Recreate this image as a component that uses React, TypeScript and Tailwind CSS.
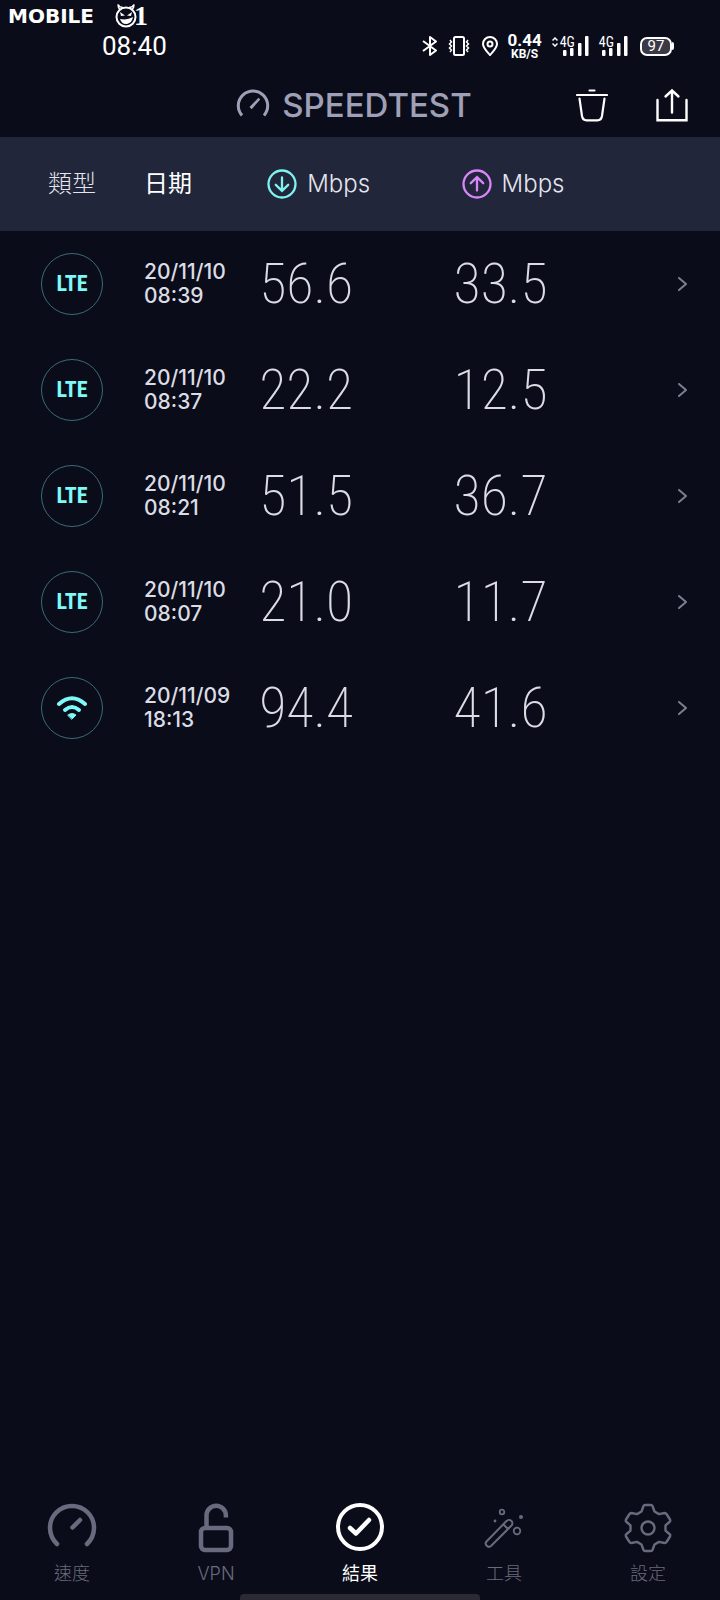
import type { ReactNode } from 'react';

interface Result {
  type: 'LTE' | 'wifi';
  date: string;
  time: string;
  download: string;
  upload: string;
}

const results: Result[] = [
  { type: 'LTE', date: '20/11/10', time: '08:39', download: '56.6', upload: '33.5' },
  { type: 'LTE', date: '20/11/10', time: '08:37', download: '22.2', upload: '12.5' },
  { type: 'LTE', date: '20/11/10', time: '08:21', download: '51.5', upload: '36.7' },
  { type: 'LTE', date: '20/11/10', time: '08:07', download: '21.0', upload: '11.7' },
  { type: 'wifi', date: '20/11/09', time: '18:13', download: '94.4', upload: '41.6' }
];

const SignalBars = () => (
  <svg width="26" height="20" viewBox="0 0 26 20" fill="currentColor">
    <rect x="0" y="14" width="3.500" height="6" rx="1" />
    <rect x="7" y="12" width="3.500" height="8" rx="1" />
    <rect x="15" y="7" width="3.500" height="13" rx="1" />
    <rect x="22" y="0" width="3.500" height="20" rx="1" />
  </svg>
);

const Watermark = () => (
  <div className="absolute top-1 left-2 flex h-6 items-center">
    <span className="w-[106px] font-['DejaVu_Sans',sans-serif] text-xl leading-6 font-bold">MOBILE</span>
    <svg width="24" height="26" viewBox="0 0 24 26" fill="none" stroke="currentColor">
      <circle cx="12" cy="14" r="9.500" strokeWidth="2" />
      <path d="M6 6.500C4 5 4 3 4 1.500c1 2 3 3 5 3M18 6.500c2-1.500 2-3.500 2-5-1 2-3 3-5 3" strokeWidth="1.500" />
      <path d="M6 9l5 3.500-4 .5zM18 9l-5 3.500 4 .5zM6 16c5 1 9 0 13-2-1 5-4 7-7 7s-5-2-6-5z" fill="currentColor" stroke="none" />
    </svg>
    <span className="-ml-1 font-['Liberation_Serif',serif] text-[28px] leading-6 font-bold">1</span>
  </div>
);

const StatusBar = () => (
  <div className="flex items-center justify-between pt-[28px] pr-[46px] pb-[9px] pl-[102px]">
    <span className="font-[Roboto,sans-serif] text-[26px] leading-6">08:40</span>
    <div className="flex h-9 items-center font-[Roboto,sans-serif]">
      <svg width="16" height="20" viewBox="0 0 16 20" fill="none" stroke="currentColor" strokeWidth="2">
        <path d="M1 5l13 9.500-6 4.500V1l6 4.500L1 15" strokeLinejoin="round" />
      </svg>
      <svg className="ml-[10px]" width="22" height="20" viewBox="0 0 22 20" fill="none" stroke="currentColor" strokeWidth="2">
        <rect x="6" y="1" width="10" height="18" rx="1.500" />
        <path d="M2 4l1.500 2-2 2 2 2-2 2 2 2L2 16M20 4l-1.500 2 2 2-2 2 2 2-2 2 1.500 2" strokeWidth="1.500" />
      </svg>
      <svg className="ml-3" width="16" height="20" viewBox="0 0 16 20" fill="none" stroke="currentColor" strokeWidth="2">
        <path d="M8 19C5 15.500 1 12 1 8a7 7 0 0 1 14 0c0 4-4 7.500-7 11z" />
        <circle cx="8" cy="8" r="2.500" />
      </svg>
      <span className="ml-[10px] flex w-[34px] flex-col items-center font-bold">
        <span className="text-[17px] leading-[15px]">0.44</span>
        <span className="text-[12px] leading-[12px]">KB/S</span>
      </span>
      <svg className="mr-[2px] mb-2 ml-[10px]" width="6" height="10" viewBox="0 0 6 10" fill="none" stroke="currentColor" strokeWidth="1.500">
        <path d="M.5 3.500L3 1l2.500 2.500M.5 6.500L3 9l2.500-2.500" />
      </svg>
      <span className="mb-2 font-['Roboto_Condensed',sans-serif] text-[14px] leading-3">4G</span>
      <span className="-ml-3">
        <SignalBars />
      </span>
      <span className="mb-2 ml-[10px] font-['Roboto_Condensed',sans-serif] text-[14px] leading-3">4G</span>
      <span className="-ml-3">
        <SignalBars />
      </span>
      <span className="ml-3 flex h-[19px] w-[32px] items-center justify-center rounded-[7px] border-2 border-current bg-[#3a3a46] text-[15px] leading-none">
        97
      </span>
      <span className="h-2 w-[2px] rounded-r bg-current" />
    </div>
  </div>
);

const TitleBar = () => (
  <header className="grid h-16 grid-cols-[1fr_auto_1fr] items-center pr-8 pl-5">
    <h1 className="col-start-2 flex items-center gap-3 text-[33px] leading-10 font-medium text-[#9fa0b7]">
      <svg width="34" height="34" viewBox="0 0 34 34" fill="none" stroke="currentColor" strokeWidth="3">
        <path d="M6 27.500A14.700 14.700 0 1 1 28 27.500" />
        <path d="M13.500 19l9-9.200 1.700 1.600-8.500 9.800z" fill="currentColor" stroke="none" />
      </svg>
      SPEEDTEST
    </h1>
    <div className="flex items-center justify-end gap-12">
      <button aria-label="刪除">
        <svg width="32" height="34" viewBox="0 0 32 34" fill="none" stroke="currentColor" strokeWidth="2.200" strokeLinecap="round">
          <path d="M13.500 2.500h5M1 7h30" />
          <path d="M3.500 10.500L6 28q.8 4.300 4.500 4.300h11q3.700 0 4.500-4.300l2.500-17.500" />
        </svg>
      </button>
      <button aria-label="分享">
        <svg width="32" height="34" viewBox="0 0 32 34" fill="none" stroke="currentColor" strokeWidth="2.400" strokeLinecap="round">
          <path d="M1.500 12v20.300h29V12" />
          <path d="M16 24.500V2.500M9.500 8.500L16 2.500l6.500 6" />
        </svg>
      </button>
    </div>
  </header>
);

const SpeedHeading = ({ direction }: { direction: 'down' | 'up' }) => (
  <div className="flex items-center gap-[10px] pl-2">
    <svg
      className={direction === 'down' ? 'text-[#7df4f0]' : 'text-[#da86fb]'}
      width="30"
      height="30"
      viewBox="0 0 30 30"
      fill="none"
      stroke="currentColor"
      strokeWidth="2.300"
      strokeLinecap="round"
    >
      <circle cx="15" cy="15" r="13.500" />
      {direction === 'down' ? (
        <path d="M15 8.500v13M8.800 15.800l6.200 6 6.200-6" />
      ) : (
        <path d="M15 21.500v-13M8.800 14.200l6.200-6 6.200 6" />
      )}
    </svg>
    <span className="text-2xl font-light">Mbps</span>
  </div>
);

const TypeBadge = ({ type }: { type: Result['type'] }) => (
  <div className="mx-auto flex size-[62px] items-center justify-center rounded-full border border-[#3b6b75] text-[#7dfaf8]">
    {type === 'LTE' ? (
      <span className="font-['Roboto_Condensed',sans-serif] text-[22px] leading-6 font-bold">LTE</span>
    ) : (
      <svg width="32" height="26" viewBox="0 0 32 26" fill="none" stroke="currentColor" strokeWidth="4" strokeLinecap="round" aria-label="Wi-Fi">
        <path d="M3 9Q16-2.500 29 9" />
        <path d="M9 15q7-6 14 0" />
        <path d="M12 20q4-3 8 0l-4 4z" fill="currentColor" stroke="currentColor" strokeWidth="1" strokeLinejoin="round" />
      </svg>
    )}
  </div>
);

const SpeedValue = ({ value }: { value: string }) => (
  <td className="font-['Roboto_Condensed',sans-serif] text-[56px] leading-none font-extralight">{value}</td>
);

const ResultTable = () => (
  <table className="w-full table-fixed border-collapse text-left">
    <thead className="bg-[#21263a] text-[#e4e5ee]">
      <tr className="h-[94px]">
        <th className="w-[20%] text-center text-2xl font-light">類型</th>
        <th className="w-[16%] text-2xl font-normal text-white">日期</th>
        <th className="w-[27%]">
          <SpeedHeading direction="down" />
        </th>
        <th className="w-[27%]">
          <SpeedHeading direction="up" />
        </th>
        <th aria-label="詳情" />
      </tr>
    </thead>
    <tbody className="text-[#dcdce4]">
      {results.map((result) => (
        <tr key={result.date + result.time} className="h-[106px]">
          <td>
            <TypeBadge type={result.type} />
          </td>
          <td className="text-[21px] leading-6 font-medium">
            {result.date}
            <br />
            {result.time}
          </td>
          <SpeedValue value={result.download} />
          <SpeedValue value={result.upload} />
          <td className="pr-8">
            <button className="ml-auto block text-[#7d7f8e]" aria-label="查看結果">
              <svg width="10" height="14" viewBox="0 0 10 14" fill="none" stroke="currentColor" strokeWidth="2">
                <path d="M1 1l7 6-7 6" strokeLinecap="round" strokeLinejoin="round" />
              </svg>
            </button>
          </td>
        </tr>
      ))}
    </tbody>
  </table>
);

interface NavItemProps {
  label: string;
  active?: boolean;
  children: ReactNode;
}

const NavItem = ({ label, active, children }: NavItemProps) => (
  <a
    href="#"
    aria-current={active ? 'page' : undefined}
    className={`flex flex-col items-center gap-[9px] ${active ? 'text-white' : 'font-light text-[#6a6a7e]'}`}
  >
    <svg width="50" height="50" viewBox="-25 -25 50 50" fill="none" stroke="currentColor" strokeLinecap="round" strokeLinejoin="round">
      {children}
    </svg>
    <span className="text-lg leading-6">{label}</span>
  </a>
);

const BottomNav = () => (
  <nav className="grid grid-cols-5 pb-2">
    <NavItem label="速度">
      <path d="M-15 16A22 22 0 1 1 15 16M.5-.5L8-8" strokeWidth="4.500" />
    </NavItem>
    <NavItem label="VPN">
      <rect x="-15" y="0" width="30" height="22" rx="4" strokeWidth="4.500" />
      <path d="M-9.500-1v-11.500a9.700 9.700 0 0 1 19.400 0v2" strokeWidth="4.500" strokeLinecap="butt" />
    </NavItem>
    <NavItem label="結果" active>
      <circle r="22" cy="-1" strokeWidth="4" />
      <path d="M-10 0l6 5.500L9-8" strokeWidth="4.500" />
    </NavItem>
    <NavItem label="工具">
      <path d="M2.500-7L-17.500 13.500a3.200 3.200 0 0 0 4.500 4.500L7.500-2.500a3.200 3.200 0 0 0-5-4.500zM-.5-3.500L4 1" strokeWidth="2" />
      <circle cx="-2" cy="-16" r="2.300" strokeWidth="1.800" />
      <circle cx="13" cy="3" r="3.300" strokeWidth="1.800" />
      <circle cx="17" cy="-11" r="2" fill="currentColor" stroke="none" />
      <circle cx="-9" cy="-7" r="1.400" fill="currentColor" stroke="none" />
    </NavItem>
    <NavItem label="設定">
      <path
        d="M-6.500-16.500L-4.500-22Q-4-23-3-23H3Q4-23 4.500-22L6.500-16.500 11-13.900 16.500-15Q18-15 18.500-14L22-8.500Q22.500-7.500 22-6.500L17.500-2.600V2.600L22 6.500Q22.500 7.500 22 8.500L18.500 14Q18 15 16.500 15L11 13.900 6.500 16.500 4.500 22Q4 23 3 23H-3Q-4 23-4.500 22L-6.500 16.500-11 13.900-16.500 15Q-18 15-18.500 14L-22 8.500Q-22.500 7.500-22 6.500L-17.500 2.600V-2.600L-22-6.500Q-22.500-7.500-22-8.500L-18.500-14Q-18-15-16.500-15L-11-13.900z"
        strokeWidth="2.400"
      />
      <circle r="6.500" strokeWidth="2.400" />
    </NavItem>
  </nav>
);

const App = () => {
  return (
    <div className="relative flex min-h-screen flex-col bg-[#0a0c1a] font-[Inter,'Noto_Sans_CJK_TC',sans-serif] text-white">
      <Watermark />
      <StatusBar />
      <TitleBar />
      <main className="flex-1">
        <ResultTable />
      </main>
      <BottomNav />
      <div className="mx-auto h-[6px] w-1/3 rounded-t bg-[#2b2a34]" />
    </div>
  );
};

export default App;
